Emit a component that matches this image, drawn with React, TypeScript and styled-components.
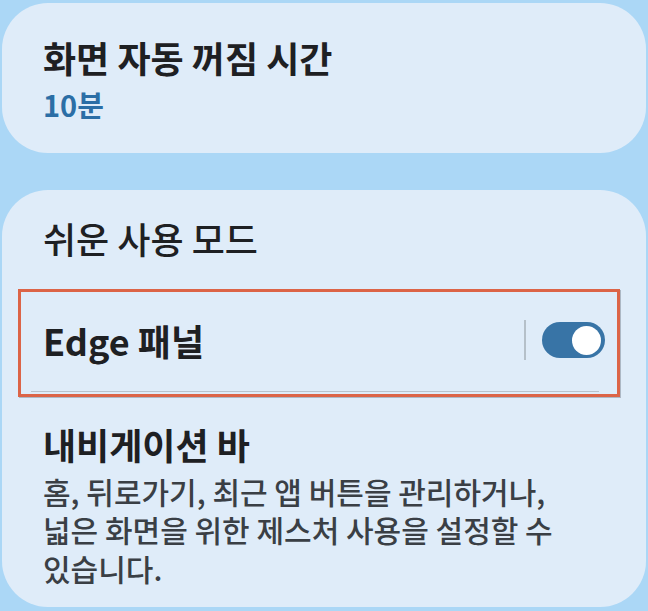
import * as React from "react";
import styled, { createGlobalStyle } from "styled-components";

const GlobalStyle = createGlobalStyle`
  html, body {
    margin: 0;
    padding: 0;
    background: #abd7f6;
  }
  body {
    font-family: "Noto Sans CJK KR", "Noto Sans", sans-serif;
  }
`;

const Page = styled.div`
  display: flex;
  flex-direction: column;
  gap: 37px;
  padding: 3px 2px 4px 2px;
  width: 648px;
  height: 611px;
  box-sizing: border-box;
`;

const Card = styled.section<{ height: number }>`
  background: #dfecf9;
  border-radius: 46px;
  height: ${({ height }) => height}px;
  box-sizing: border-box;
  display: flex;
  flex-direction: column;
`;

const Block = styled.div<{ top: number }>`
  padding: ${({ top }) => top}px 30px 0 41px;
`;

const Title = styled.div<{ weight?: number }>`
  font-size: 36px;
  line-height: 44px;
  font-weight: ${({ weight }) => weight ?? 700};
  letter-spacing: 0;
  color: #1e2023;
  white-space: nowrap;
`;

const Value = styled.div`
  margin-top: 8px;
  font-size: 29px;
  line-height: 34px;
  font-weight: 700;
  color: #2b6ea6;
`;

const Desc = styled.div`
  margin-top: 6px;
  font-size: 30px;
  line-height: 38.5px;
  font-weight: 500;
  color: #3a3f45;
  white-space: nowrap;
`;

const Highlight = styled.div`
  margin: 29px 26px 0 16px;
  height: 108px;
  border: 3px solid #dc6447;
  box-shadow: 1px 1px 0 rgba(80, 90, 100, 0.35);
  box-sizing: border-box;
  display: flex;
  flex-direction: column;
`;

const Row = styled.div`
  flex: 1;
  display: flex;
  align-items: center;
  padding: 0 12px 2px 22px;
`;

const RowLabel = styled(Title)`
  flex: 1;
`;

const Divider = styled.div`
  height: 1px;
  margin: 0 18px 2px 10px;
  background: #b9c3cc;
`;

const VLine = styled.div`
  width: 2px;
  height: 40px;
  background: #b5c0c9;
  margin-right: 16px;
`;

const Switch = styled.div<{ on: boolean }>`
  width: 63px;
  height: 36px;
  border-radius: 18px;
  background: ${({ on }) => (on ? "#3874a6" : "#9aa5ae")};
  display: flex;
  align-items: center;
  justify-content: ${({ on }) => (on ? "flex-end" : "flex-start")};
  padding: 0 4px;
  box-sizing: border-box;
`;

const Knob = styled.div`
  width: 29px;
  height: 29px;
  border-radius: 50%;
  background: #ffffff;
`;

export default function App() {
  return (
    <>
      <GlobalStyle />
      <Page>
        <Card height={150}>
          <Block top={32}>
            <Title>화면 자동 꺼짐 시간</Title>
            <Value>10분</Value>
          </Block>
        </Card>
        <Card height={418}>
          <Block top={26}>
            <Title weight={500}>쉬운 사용 모드</Title>
          </Block>
          <Highlight>
            <Row>
              <RowLabel>Edge 패널</RowLabel>
              <VLine />
              <Switch on>
                <Knob />
              </Switch>
            </Row>
            <Divider />
          </Highlight>
          <Block top={25}>
            <Title>내비게이션 바</Title>
            <Desc>
              홈, 뒤로가기, 최근 앱 버튼을 관리하거나,
              <br />
              넓은 화면을 위한 제스처 사용을 설정할 수
              <br />
              있습니다.
            </Desc>
          </Block>
        </Card>
      </Page>
    </>
  );
}
